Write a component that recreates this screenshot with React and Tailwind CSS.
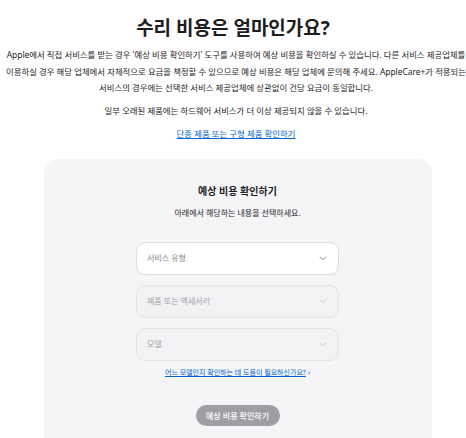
import React from 'react';

const font = { fontFamily: '"Noto Sans", "Noto Sans CJK KR", sans-serif' };

function Chevron({ light }) {
  return (
    <svg width="8" height="5" viewBox="0 0 8 5" fill="none">
      <path d="M1 1l3 2.6L7 1" stroke={light ? '#cfcfd4' : '#98989d'} strokeWidth="1" strokeLinecap="round" strokeLinejoin="round" />
    </svg>
  );
}

function Select({ label, disabled }) {
  return (
    <div
      className={`w-[203px] h-[33px] rounded-[9px] border flex items-center justify-between pl-[10px] pr-[11px] ${
        disabled ? 'bg-[#f2f2f4] border-[#e5e5e8]' : 'bg-white border-[#dcdce0]'
      }`}
    >
      <span className={`text-[8px] ${disabled ? 'text-[#a1a1a6]' : 'text-[#86868b]'}`}>{label}</span>
      <Chevron light={disabled} />
    </div>
  );
}

export default function App() {
  return (
    <div className="w-full h-[438px] overflow-hidden bg-white text-[#1d1d1f]" style={font}>
      <div className="flex flex-col items-center">
        <h1 className="mt-[14px] text-[19px] leading-[28px] font-bold">수리 비용은 얼마인가요?</h1>

        <div className="flex justify-center w-full mt-[5px]">
          <div className="shrink-0 w-[520px] ml-[6px] text-center text-[8.4px] leading-[16.5px]">
            <p className="whitespace-nowrap">Apple에서 직접 서비스를 받는 경우 '예상 비용 확인하기' 도구를 사용하여 예상 비용을 확인하실 수 있습니다. 다른 서비스 제공업체를</p>
            <p className="whitespace-nowrap">이용하실 경우 해당 업체에서 자체적으로 요금을 책정할 수 있으므로 예상 비용은 해당 업체에 문의해 주세요. AppleCare+가 적용되는</p>
            <p className="whitespace-nowrap">서비스의 경우에는 선택한 서비스 제공업체에 상관없이 건당 요금이 동일합니다.</p>
            <p className="mt-[6px] whitespace-nowrap">일부 오래된 제품에는 하드웨어 서비스가 더 이상 제공되지 않을 수 있습니다.</p>
            <p className="mt-[7px] whitespace-nowrap">
              <a className="text-[#0066cc] underline">단종 제품 또는 구형 제품 확인하기</a>
            </p>
          </div>
        </div>

        <div className="mt-[16px] ml-[9px] w-[388px] h-[300px] shrink-0 rounded-[14px] bg-[#f5f5f7] flex flex-col items-center">
          <h2 className="mt-[24px] text-[10px] leading-[16px] font-bold">예상 비용 확인하기</h2>
          <p className="mt-[8px] text-[8px] leading-[12px]">아래에서 해당하는 내용을 선택하세요.</p>
          <div className="mt-[23px] flex flex-col gap-[10px]">
            <Select label="서비스 유형" />
            <Select label="제품 또는 액세서리" disabled />
            <Select label="모델" disabled />
          </div>
          <p className="mt-[7px] text-[7px] leading-[10px]">
            <a className="text-[#0066cc] underline">어느 모델인지 확인하는 데 도움이 필요하신가요?</a>
            <span className="text-[#0066cc] ml-[2px]">›</span>
          </p>
          <button className="mt-[27px] w-[84px] h-[21px] rounded-full bg-[#9e9ea3] text-white text-[8px] font-medium leading-[21px]">
            예상 비용 확인하기
          </button>
        </div>
      </div>
    </div>
  );
}
